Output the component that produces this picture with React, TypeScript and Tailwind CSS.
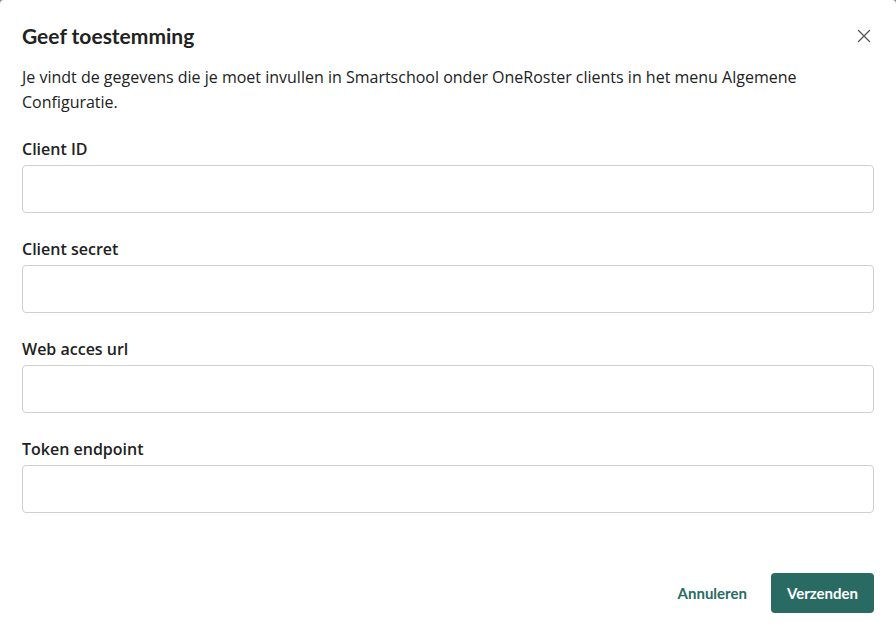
import { X } from "lucide-react";

const fields = ["Client ID", "Client secret", "Web acces url", "Token endpoint"];

export default function App() {
  return (
    <div className="min-h-screen bg-[#8a8a8a]">
      <div
        className="flex h-[633px] flex-col rounded-t-[4px] bg-white px-[22px] text-[#222]"
        style={{ fontFamily: '"Open Sans", sans-serif' }}
      >
        <div className="flex items-center justify-between pt-[24px]">
          <h2 className="text-[21px] font-bold leading-[24px]" style={{ fontFamily: "Lato, sans-serif" }}>
            Geef toestemming
          </h2>
          <button type="button" className="-mr-[1px] text-[#555]">
            <X size={22} strokeWidth={1.4} />
          </button>
        </div>
        <p className="mt-[17px] text-[16px] leading-[25px]">
          Je vindt de gegevens die je moet invullen in Smartschool onder OneRoster clients in het menu Algemene
          Configuratie.
        </p>
        <div className="mt-[23px] flex flex-col gap-[25px]">
          {fields.map((f) => (
            <div key={f}>
              <label className="block text-[16px] font-semibold leading-[22px]">{f}</label>
              <input
                type="text"
                className="mt-[5px] block h-[48px] w-full rounded-[4px] border border-[#cfcfcf] px-3 outline-none"
              />
            </div>
          ))}
        </div>
        <div className="mt-auto flex items-center justify-end gap-[24px] pb-[20px]" style={{ fontFamily: "Lato, sans-serif" }}>
          <button type="button" className="text-[15px] font-bold text-[#2a6b63]">
            Annuleren
          </button>
          <button type="button" className="h-[40px] rounded-[4px] bg-[#296a63] px-[16px] text-[15px] font-bold text-white">
            Verzenden
          </button>
        </div>
      </div>
    </div>
  );
}
